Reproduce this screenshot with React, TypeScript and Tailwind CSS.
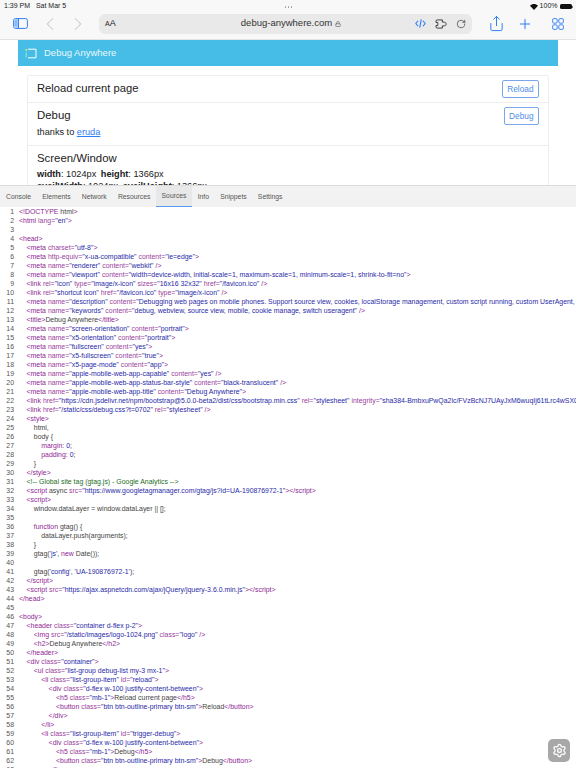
import { ChevronLeft, ChevronRight, Lock, Plus, RotateCw, Share, Settings } from 'lucide-react';
import type { ReactNode } from 'react';

const tabs = ['Console', 'Elements', 'Network', 'Resources', 'Sources', 'Info', 'Snippets', 'Settings'];

// indent level + text, kind: c = comment, s = css, j = js, nothing = html
type Line = [number, string, string?];

const lines: Line[] = [
    [0, '<!DOCTYPE html>'],
    [0, '<html lang="en">'],
    [0, ''],
    [0, '<head>'],
    [1, '<meta charset="utf-8">'],
    [1, '<meta http-equiv="x-ua-compatible" content="ie=edge">'],
    [1, '<meta name="renderer" content="webkit" />'],
    [1, '<meta name="viewport" content="width=device-width, initial-scale=1, maximum-scale=1, minimum-scale=1, shrink-to-fit=no">'],
    [1, '<link rel="icon" type="image/x-icon" sizes="16x16 32x32" href="/favicon.ico" />'],
    [1, '<link rel="shortcut icon" href="/favicon.ico" type="image/x-icon" />'],
    [1, '<meta name="description" content="Debugging web pages on mobile phones. Support source view, cookies, localStorage management, custom script running, custom UserAgent, Inspect elements" />'],
    [1, '<meta name="keywords" content="debug, webview, source view, mobile, cookie manage, switch useragent" />'],
    [1, '<title>Debug Anywhere</title>'],
    [1, '<meta name="screen-orientation" content="portrait">'],
    [1, '<meta name="x5-orientation" content="portrait">'],
    [1, '<meta name="fullscreen" content="yes">'],
    [1, '<meta name="x5-fullscreen" content="true">'],
    [1, '<meta name="x5-page-mode" content="app">'],
    [1, '<meta name="apple-mobile-web-app-capable" content="yes" />'],
    [1, '<meta name="apple-mobile-web-app-status-bar-style" content="black-translucent" />'],
    [1, '<meta name="apple-mobile-web-app-title" content="Debug Anywhere">'],
    [1, '<link href="https://cdn.jsdelivr.net/npm/bootstrap@5.0.0-beta2/dist/css/bootstrap.min.css" rel="stylesheet" integrity="sha384-BmbxuPwQa2lc/FVzBcNJ7UAyJxM6wuqIj61tLrc4wSX0szH/Ev+nYRRuWlolflfl" crossorigin="anonymous">'],
    [1, '<link href="/static/css/debug.css?t=0702" rel="stylesheet" />'],
    [1, '<style>'],
    [2, 'html,'],
    [2, 'body {'],
    [3, 'margin: 0;', 's'],
    [3, 'padding: 0;', 's'],
    [2, '}'],
    [1, '</style>'],
    [1, '<!-- Global site tag (gtag.js) - Google Analytics -->', 'c'],
    [1, '<script async src="https://www.googletagmanager.com/gtag/js?id=UA-190876972-1"></script>'],
    [1, '<script>'],
    [2, 'window.dataLayer = window.dataLayer || [];'],
    [0, ''],
    [2, 'function gtag() {', 'j'],
    [3, 'dataLayer.push(arguments);'],
    [2, '}'],
    [2, "gtag('js', new Date());", 'j'],
    [0, ''],
    [2, "gtag('config', 'UA-190876972-1');", 'j'],
    [1, '</script>'],
    [1, '<script src="https://ajax.aspnetcdn.com/ajax/jQuery/jquery-3.6.0.min.js"></script>'],
    [0, '</head>'],
    [0, ''],
    [0, '<body>'],
    [1, '<header class="container d-flex p-2">'],
    [2, '<img src="/static/images/logo-1024.png" class="logo" />'],
    [2, '<h2>Debug Anywhere</h2>'],
    [1, '</header>'],
    [1, '<div class="container">'],
    [2, '<ul class="list-group debug-list my-3 mx-1">'],
    [3, '<li class="list-group-item" id="reload">'],
    [4, '<div class="d-flex w-100 justify-content-between">'],
    [5, '<h5 class="mb-1">Reload current page</h5>'],
    [5, '<button class="btn btn-outline-primary btn-sm">Reload</button>'],
    [4, '</div>'],
    [3, '</li>'],
    [3, '<li class="list-group-item" id="trigger-debug">'],
    [4, '<div class="d-flex w-100 justify-content-between">'],
    [5, '<h5 class="mb-1">Debug</h5>'],
    [5, '<button class="btn btn-outline-primary btn-sm">Debug</button>'],
    [4, '</li>'],
];

const indents = ['pl-0', 'pl-[7.5px]', 'pl-[14.8px]', 'pl-[22.2px]', 'pl-[29.6px]', 'pl-[37px]'];

function highlight(text: string, kind?: string) {
    if (kind === 'c') return <span className="text-[#236e25]">{text}</span>;
    const re =
        kind === 's'
            ? /([\w-]+:)|(\d+)/g
            : kind === 'j'
              ? /(function|new)|('[^']*')/g
              : /(<\/?[\w!]+|\/?>)|("[^"]*")|([\w-]+=)/g;
    const out: ReactNode[] = [];
    let last = 0;
    let m: RegExpExecArray | null;
    while ((m = re.exec(text))) {
        if (m.index > last) out.push(text.slice(last, m.index));
        out.push(
            <span key={m.index} className={m[2] ? 'text-[#2a2aa8]' : m[3] ? 'text-[#9a3f9e]' : 'text-[#8f1f95]'}>
                {m[0]}
            </span>,
        );
        last = m.index + m[0].length;
    }
    out.push(text.slice(last));
    return out;
}

function SidebarIcon() {
    return (
        <svg viewBox="0 0 15 11" className="w-[15px] h-[11px] text-[#2f7df6]" fill="none" stroke="currentColor">
            <rect x="0.6" y="0.6" width="13.8" height="9.8" rx="1.8" strokeWidth="1" />
            <rect x="1" y="1" width="4.5" height="9" fill="#a9cdfb" stroke="none" />
            <path d="M5.5 1v9" strokeWidth="1" />
            <path d="M2.2 3h1.6M2.2 5h1.6M2.2 7h1.6" strokeWidth="0.7" />
        </svg>
    );
}

function Wifi() {
    return (
        <svg viewBox="0 0 12 9" className="w-[8px] h-[6px]" fill="#111">
            <path d="M6 9 0 2.8C3.4-.9 8.6-.9 12 2.8z" />
        </svg>
    );
}

function Battery() {
    return (
        <div className="flex items-center gap-[0.5px]">
            <div className="w-[12px] h-[5.5px] rounded-[1.5px] bg-[#111]" />
            <div className="w-[1px] h-[2px] bg-[#777]" />
        </div>
    );
}

function CodeIcon() {
    return (
        <svg viewBox="0 0 12 12" className="w-[11px] h-[11px] text-[#2f7df6]" fill="none" stroke="currentColor" strokeWidth="1.2">
            <path d="M3.4 3 .9 6l2.5 3M8.6 3l2.5 3-2.5 3M6.8 1.5 5.2 10.5" />
        </svg>
    );
}

function ExtensionIcon() {
    return (
        <svg viewBox="0 0 13 11" className="w-[12px] h-[10px] text-[#333]" fill="none" stroke="currentColor" strokeWidth="1">
            <path d="M1 2.2C1 1.5 1.5 1 2.2 1H8v2.4h1.6c1.7 0 2.6 1 2.6 2.1s-.9 2.1-2.6 2.1H8V10H2.2C1.5 10 1 9.5 1 8.8V7.2h2V3.8H1z" />
        </svg>
    );
}

function GridIcon() {
    return (
        <svg viewBox="0 0 12 12" className="w-[12px] h-[12px] text-[#2f7df6]" fill="none" stroke="currentColor" strokeWidth="0.9">
            <rect x="0.6" y="0.6" width="4.6" height="4.6" rx="1.3" />
            <rect x="6.8" y="0.6" width="4.6" height="4.6" rx="1.3" />
            <rect x="0.6" y="6.8" width="4.6" height="4.6" rx="1.3" />
            <rect x="6.8" y="6.8" width="4.6" height="4.6" rx="1.3" />
        </svg>
    );
}

function Logo() {
    return (
        <svg viewBox="0 0 12 11" className="w-[12px] h-[11px]" fill="none">
            <path d="M3 1.2h8v8.6H3" stroke="#fff" strokeWidth="1" />
            <path d="M1.2 1v2" stroke="#c9f26b" strokeWidth="1.4" />
            <path d="M1.2 4.5v5" stroke="#7fe0d0" strokeWidth="1.4" />
        </svg>
    );
}

function OutlineButton({ label }: { label: string }) {
    return (
        <button className="shrink-0 h-[18px] px-[4.5px] rounded-[2px] border border-[#7aa7ec] text-[8.3px] text-[#4f8de8] leading-none">
            {label}
        </button>
    );
}

export default function App() {
    return (
        <div className="w-[576px] h-[768px] flex flex-col overflow-hidden bg-white font-['Liberation_Sans',sans-serif]">
            {/* Safari chrome */}
            <div className="h-[40px] shrink-0 bg-[#f8f8f8] border-b border-[#dfe3e6] flex flex-col">
                <div className="h-[13px] pl-[4px] pr-[3px] flex items-center justify-between text-[7px] text-[#222]">
                    <span className="w-[120px] whitespace-pre">1:39 PM   Sat Mar 5</span>
                    <div className="flex gap-[1.5px] mt-[1px]">
                        <span className="w-[1.5px] h-[1.5px] rounded-full bg-[#999]" />
                        <span className="w-[1.5px] h-[1.5px] rounded-full bg-[#999]" />
                        <span className="w-[1.5px] h-[1.5px] rounded-full bg-[#999]" />
                    </div>
                    <div className="w-[120px] flex items-center justify-end gap-[2px]">
                        <Wifi />
                        <span>100%</span>
                        <Battery />
                    </div>
                </div>
                <div className="flex items-center pl-[13px] pr-[12px] h-[21px]">
                    <SidebarIcon />
                    <ChevronLeft className="w-[22px] h-[22px] ml-[11px] text-[#c8c8c8]" strokeWidth={1.1} />
                    <ChevronRight className="w-[22px] h-[22px] ml-[5.5px] text-[#c8c8c8]" strokeWidth={1.1} />
                    <div className="ml-[10.5px] w-[373px] h-[20px] rounded-[6px] bg-[#e9e9e9] flex items-center pl-[6px] pr-[6px]">
                        <span className="w-[24px] flex items-baseline text-[#222] leading-none">
                            <span className="text-[7px]">A</span>
                            <span className="text-[9px]">A</span>
                        </span>
                        <div className="flex-1 flex items-center justify-center gap-[3px] pl-[38px] text-[9.5px] text-[#333]">
                            debug-anywhere.com
                            <Lock className="w-[6px] h-[6px] text-[#777]" strokeWidth={3} />
                        </div>
                        <div className="flex items-center gap-[9px]">
                            <CodeIcon />
                            <ExtensionIcon />
                            <RotateCw className="w-[10px] h-[10px] text-[#333]" strokeWidth={1.6} />
                        </div>
                    </div>
                    <Share className="w-[17px] h-[17px] ml-[16px] text-[#2f7df6]" strokeWidth={1.4} />
                    <Plus className="w-[16px] h-[16px] ml-[12px] text-[#2f7df6]" strokeWidth={1.5} />
                    <div className="ml-auto">
                        <GridIcon />
                    </div>
                </div>
            </div>

            {/* Page */}
            <div className="h-[145px] shrink-0 overflow-hidden px-[18px]">
                <div className="h-[26px] bg-[#45bde6] flex items-center gap-[2px] pl-[7px] text-[9.5px] text-[#eaf8fd]">
                    <Logo />
                    <span className="ml-[5px]">Debug Anywhere</span>
                </div>
                <div className="mt-[9px] mx-[9px] border border-[#eeeeee] rounded-t-[2px] text-[#222]">
                    <div className="h-[27px] pl-[9px] pr-[9px] flex items-center justify-between border-b border-[#eeeeee]">
                        <span className="text-[11.2px] mb-[1px]">Reload current page</span>
                        <OutlineButton label="Reload" />
                    </div>
                    <div className="h-[43px] pl-[9px] pr-[9px] pt-[4px] border-b border-[#eeeeee]">
                        <div className="flex items-start justify-between">
                            <span className="text-[11.4px] leading-[17px]">Debug</span>
                            <OutlineButton label="Debug" />
                        </div>
                        <p className="text-[9.2px] leading-[12px] mt-[1px]">
                            thanks to <a className="text-[#2f7df6] underline">eruda</a>
                        </p>
                    </div>
                    <div className="pl-[9px] pt-[4px]">
                        <div className="text-[11.4px] leading-[16px]">Screen/Window</div>
                        <p className="text-[9.2px] leading-[12px] mt-[2px]">
                            <b>width</b>: 1024px <b className="ml-[2px]">height</b>: 1366px
                        </p>
                        <p className="text-[9.2px] leading-[12px]">
                            <b>availWidth</b>: 1024px <b className="ml-[2px]">availHeight</b>: 1366px
                        </p>
                    </div>
                </div>
            </div>

            {/* Devtools tabs */}
            <div className="h-[22px] shrink-0 bg-[#f2f2f2] border-t border-[#dcdcdc] flex pl-[0.5px] text-[6.8px] text-[#555]">
                {tabs.map((tab) => (
                    <div
                        key={tab}
                        className={
                            tab === 'Sources'
                                ? 'px-[5.6px] pt-[1px] flex items-center bg-[#e8e8e8] border-b border-[#5b9bef]'
                                : 'px-[5.6px] pt-[1px] flex items-center'
                        }
                    >
                        {tab}
                    </div>
                ))}
            </div>

            {/* Source */}
            <div className="relative flex-1 min-h-0 overflow-hidden text-[6.93px] leading-[9px] text-[#444]">
                {lines.map(([level, text, kind], i) => (
                    <div key={i} className="flex h-[9px] whitespace-pre">
                        <span className="w-[14px] shrink-0 text-right text-[#555]">{i + 1}</span>
                        <div className={'ml-[5px] ' + indents[level]}>{highlight(text, kind)}</div>
                    </div>
                ))}
                <div className="absolute right-[6px] bottom-[6px] w-[22px] h-[23px] rounded-[5px] bg-[#a8a8a8] flex items-center justify-center">
                    <Settings className="w-[15px] h-[15px] text-white" strokeWidth={2} />
                </div>
            </div>
        </div>
    );
}
